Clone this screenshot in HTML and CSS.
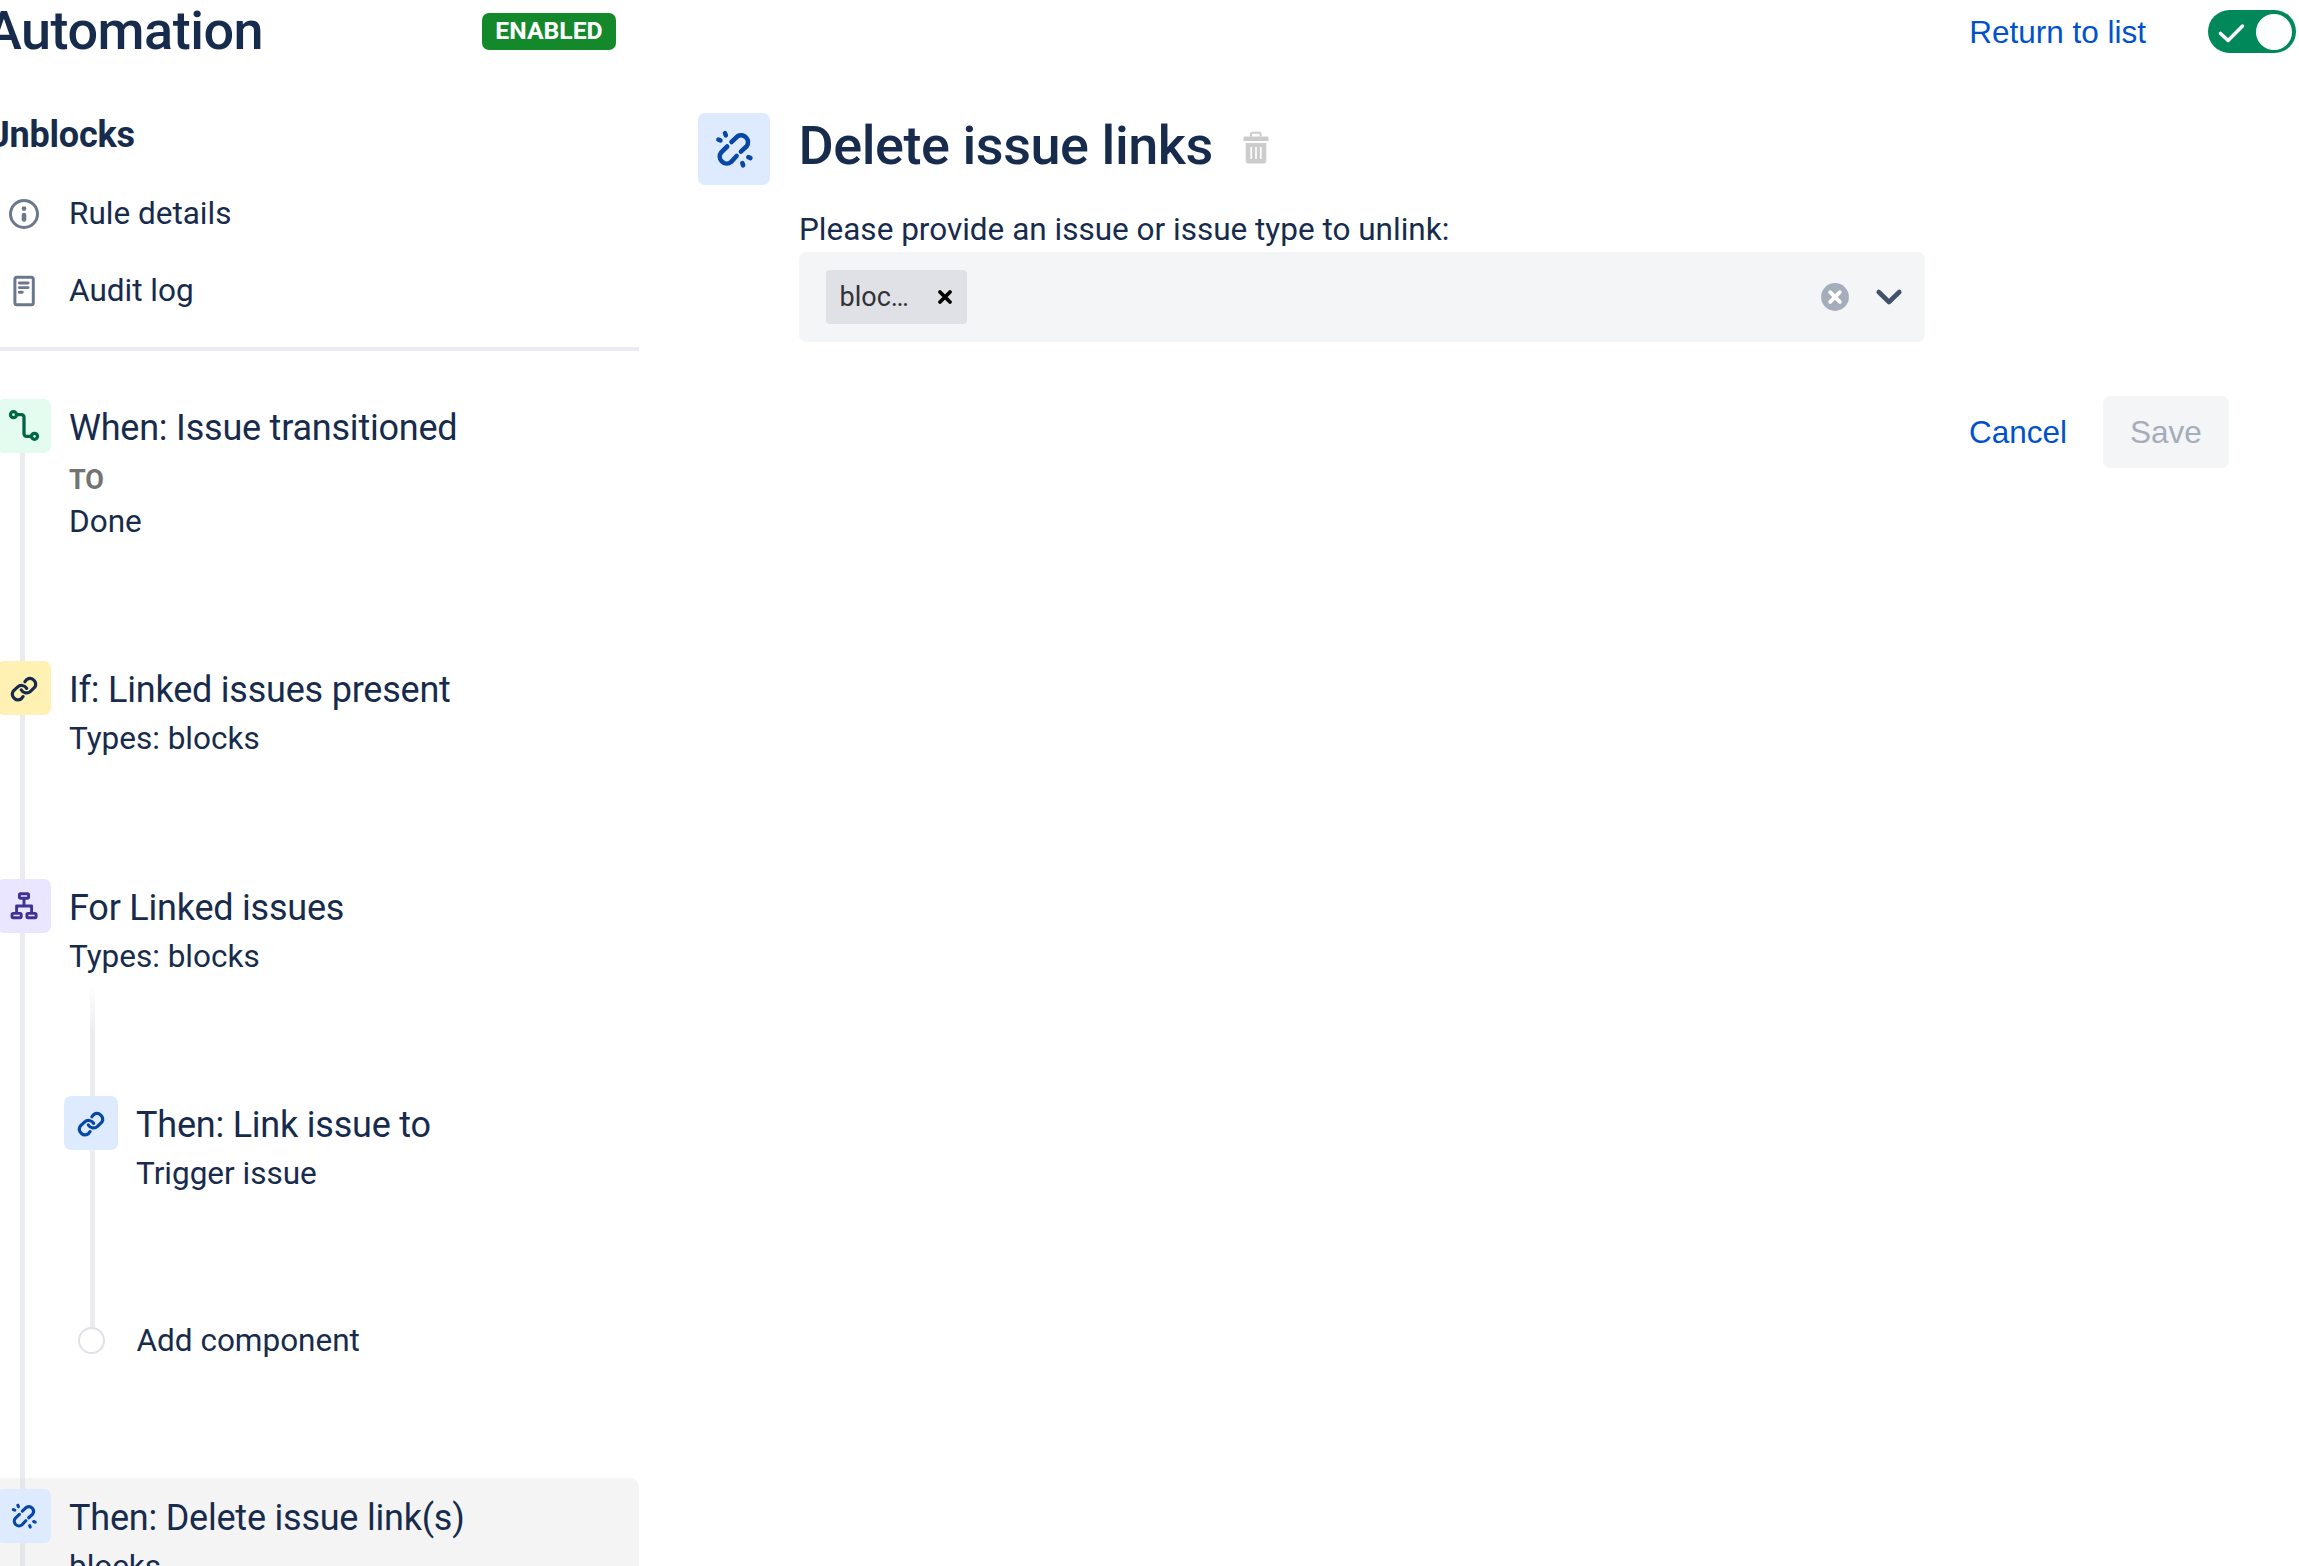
FILE: index.html
```html
<!DOCTYPE html>
<html lang="en">
<head>
<meta charset="utf-8">
<title>Automation</title>
<link rel="stylesheet" href="styles.css">
</head>
<body>
<svg width="0" height="0" class="defs">
  <symbol id="link" viewBox="0 0 54 54">
    <g fill="none" stroke="currentColor" stroke-width="3.2" stroke-linecap="round" stroke-linejoin="round">
      <path d="M27.9 20.8L29.7 18.6A5.7 5.7 0 0 1 37.8 26.2L33.5 30.3A5.9 5.9 0 0 1 24.3 29"/>
      <path d="M26.1 35.6L24.3 37.8A5.7 5.7 0 0 1 16.2 30.2L20.5 26.1A5.9 5.9 0 0 1 29.7 27.4"/>
    </g>
  </symbol>
  <symbol id="unlink" viewBox="0 0 72 72">
    <g fill="none" stroke="currentColor" stroke-width="4.6" stroke-linecap="round">
      <path d="M33.5 29L39.5 23.3A6.9 6.9 0 0 1 48.7 33.2L42.9 38.6"/>
      <path d="M29.2 33.5L23.3 39.3A6.9 6.9 0 0 0 33 49L38.6 43"/>
      <path d="M27 20.2l.8 2.1M20.4 26.6l2 .8M44.4 50.2l.7 2.1M50.3 44.2l2.1.8"/>
    </g>
  </symbol>
</svg>
<div class="app">
  <aside class="sidebar">
    <header class="side-head"><h1>Automation</h1><span class="badge">ENABLED</span></header>
    <h2>Unblocks</h2>
    <nav>
      <a class="nav-row"><svg width="54" height="54" viewBox="0 0 54 54"><circle cx="27" cy="27" r="13.5" fill="none" stroke="#6b778c" stroke-width="3"/><circle cx="27" cy="21.6" r="2.3" fill="#6b778c"/><path d="M27 28v4.5" stroke="#6b778c" stroke-width="4.6" stroke-linecap="round"/></svg>Rule details</a>
      <a class="nav-row"><svg width="54" height="54" viewBox="0 0 54 54" fill="none" stroke="#6b778c" stroke-linecap="round"><rect x="17.9" y="13.3" width="18.4" height="27.4" rx="2" stroke-width="3"/><path d="M22.3 19h8.8M22.3 23.6h8.8M22.3 28.2h3" stroke-width="2.9"/></svg>Audit log</a>
    </nav>
    <hr>
    <div class="flow">
      <div class="node transition">
        <span class="tile green"><svg width="54" height="54" viewBox="0 0 54 54" fill="none" stroke="currentColor" stroke-width="3.3"><circle cx="16.5" cy="15.7" r="3"/><circle cx="37.5" cy="37.3" r="3"/><path d="M20 15.7h4.5a2.5 2.5 0 0 1 2.5 2.5v16.6a2.5 2.5 0 0 0 2.5 2.5h4.5"/></svg></span>
        <div><h3>When: Issue transitioned</h3><p class="to">TO</p><p>Done</p></div>
      </div>
      <div class="node condition">
        <span class="tile yellow"><svg width="54" height="54"><use href="#link"/></svg></span>
        <div><h3>If: Linked issues present</h3><p>Types: blocks</p></div>
      </div>
      <div class="node branch">
        <span class="tile purple"><svg width="54" height="54" viewBox="0 0 54 54" fill="none" stroke="currentColor" stroke-width="2.9"><rect x="22.4" y="14.8" width="9.2" height="4.4" rx="1.2"/><rect x="15" y="34.4" width="9.2" height="4.4" rx="1.2"/><rect x="29.9" y="34.4" width="9.2" height="4.4" rx="1.2"/><path d="M27 19.5v7.5M19.6 34v-7h15v7" stroke-linejoin="round"/></svg></span>
        <div><h3>For Linked issues</h3><p>Types: blocks</p></div>
      </div>
      <div class="nested">
        <div class="node child">
          <span class="tile blue"><svg width="54" height="54"><use href="#link"/></svg></span>
          <div><h3>Then: Link issue to</h3><p>Trigger issue</p></div>
        </div>
        <div class="add"><span class="dot"></span>Add component</div>
      </div>
      <div class="node selected">
        <span class="tile blue"><svg width="54" height="54"><use href="#unlink" x="2.5" y="2.5" width="49" height="49"/></svg></span>
        <div><h3>Then: Delete issue link(s)</h3><p>blocks</p></div>
      </div>
    </div>
  </aside>
  <main>
    <div class="topbar"><a>Return to list</a>
      <span class="toggle"><svg width="32" height="30" viewBox="0 0 32 30"><path d="M5.5 16.4l7.6 7.2L27.5 9" fill="none" stroke="#fff" stroke-width="3.5" stroke-linecap="round" stroke-linejoin="round"/></svg><i></i></span>
    </div>
    <section class="panel">
      <span class="tile large blue"><svg width="72" height="72"><use href="#unlink"/></svg></span>
      <div class="form">
        <div class="title"><h1>Delete issue links</h1>
          <svg class="trash" width="26" height="34" viewBox="0 0 26 34"><path d="M8 5.5V3.2Q8 1.8 9.4 1.8h6.8q1.4 0 1.4 1.4v2.3" fill="none" stroke="#ccc" stroke-width="2"/><path d="M2 5.5h22q1.5 0 1.5 1.5v3H.5V7Q.5 5.5 2 5.5z" fill="#ccc"/><path d="M2.7 12h20.6v17.5q0 3-3 3H5.7q-3 0-3-3z" fill="#ccc"/><path d="M8.2 16v12M13 16v12M17.8 16v12" stroke="#fff" stroke-width="1.6"/></svg>
        </div>
        <label>Please provide an issue or issue type to unlink:</label>
        <div class="select">
          <span class="chip">bloc…<svg width="16" height="16" viewBox="0 0 16 16"><path d="M3 3l10 10M13 3L3 13" stroke="#000" stroke-width="3.8" stroke-linecap="round"/></svg></span>
          <svg class="clear" width="28" height="28" viewBox="0 0 28 28"><circle cx="14" cy="14" r="13.9" fill="#a5adba"/><path d="M9.2 9.2l9.6 9.6M18.8 9.2l-9.6 9.6" stroke="#fff" stroke-width="3.8" stroke-linecap="round"/></svg>
          <svg width="28" height="18" viewBox="0 0 28 18"><path d="M3.7 4l10.3 10L24.3 4" fill="none" stroke="#42526e" stroke-width="4.6" stroke-linecap="round" stroke-linejoin="round"/></svg>
        </div>
        <div class="actions"><a>Cancel</a><button disabled>Save</button></div>
      </div>
    </section>
  </main>
</div>
</body>
</html>
```
FILE: styles.css
```css
* { box-sizing: border-box; }
body { margin: 0; background: #fff; color: #172b4d; font: 31.5px/40px Roboto, sans-serif; overflow: hidden; }
h1, h2, h3, p { margin: 0; }
svg { display: block; flex: none; }
.defs { position: absolute; }
.app { display: flex; height: 1566px; margin-left: -3px; overflow: hidden; }
.sidebar { width: 642px; flex: none; }
.side-head { display: flex; justify-content: space-between; height: 115px; padding-right: 23px; }
h1 { font-size: 54px; line-height: 61px; font-weight: 500; letter-spacing: -0.5px; white-space: nowrap; }
.side-head h1 { margin-left: -11px; }
.badge { width: 134px; height: 37px; margin-top: 13px; border-radius: 7px; background: #14892c; color: #fff; font-size: 24.75px; font-weight: 700; line-height: 36px; text-align: center; }
h2 { margin-left: -11px; font-size: 36px; line-height: 40px; font-weight: 700; letter-spacing: -0.216px; height: 60px; }
.nav-row { display: flex; align-items: center; gap: 18px; height: 77px; }
hr { margin: 18px 0 0; border: 0; height: 4px; background: #ebecf0; }
.flow { padding-top: 48px; background: linear-gradient(#ebecf0, #ebecf0) 23px 60px / 5px 100% no-repeat; }
.node { display: flex; gap: 18px; }
.tile { display: block; width: 54px; height: 54px; flex: none; border-radius: 7px; }
.green { background: #e3fcef; color: #006644; }
.yellow { background: #fff0b3; color: #172b4d; }
.purple { background: #eae6ff; color: #403294; }
.blue { background: #deebff; color: #0747a6; }
h3 { padding-top: 1px; font-size: 36px; line-height: 57px; font-weight: 400; letter-spacing: -0.216px; white-space: nowrap; }
.to { margin-top: 2px; font-size: 27px; line-height: 42px; height: 43px; font-weight: 700; color: #737373; }
.transition { height: 262px; }
.condition { height: 218px; }
.branch { height: 106px; }
.nested { height: 493px; padding: 111px 0 0 67px; background: linear-gradient(rgba(235,236,240,0), #ebecf0 50px) 93px 0 / 5px 343px no-repeat; }
.child { height: 221px; }
.add { display: flex; align-items: center; height: 47px; gap: 31.5px; padding-left: 14px; }
.dot { width: 27px; height: 27px; border: 2.5px solid #dfe1e6; border-radius: 50%; background: #fff; }
.selected { height: 100px; padding-top: 11px; border-radius: 0 9px 0 0; background: linear-gradient(#e5e6ea, #e5e6ea) 23px 0 / 5px 100% no-repeat #f4f4f4; }
main { flex: 1; padding-left: 59px; }
.topbar { display: flex; justify-content: flex-end; align-items: center; height: 113px; padding: 10px 3px 60px 0; gap: 62px; }
.topbar a, .actions a, button { font: 31.5px/36px "Liberation Sans", Arial, sans-serif; color: #0052cc; }
.toggle { display: flex; align-items: center; justify-content: space-between; width: 88px; height: 43px; padding: 0 4px 0 7px; border-radius: 22px; background: #00875a; }
.toggle i { width: 36px; height: 36px; border-radius: 50%; background: #fff; }
.panel { display: flex; gap: 29px; }
.large { width: 72px; height: 72px; }
.form { width: 1430px; }
.title { display: flex; gap: 30px; padding-top: 2px; height: 97px; }
.title h1 { margin-left: -0.5px; letter-spacing: -0.45px; }
.trash { margin-top: 16px; }
label { display: block; height: 42px; }
.select { display: flex; align-items: center; width: 1126px; height: 90px; padding: 0 22px 0 27px; border-radius: 7px; background: #f4f5f7; }
.chip { display: flex; align-items: center; justify-content: space-between; width: 141px; height: 54px; padding: 0 14px 0 13.5px; border-radius: 4px; background: #dfe1e6; color: #333; font-size: 27px; }
.clear { margin: 0 26px 0 auto; }
.actions { display: flex; justify-content: flex-end; align-items: center; gap: 36px; margin-top: 54px; }
button { width: 126px; height: 72px; padding: 0; border: 0; border-radius: 7px; background: #f4f5f7; }
.actions button { color: #a5adba; }
```
